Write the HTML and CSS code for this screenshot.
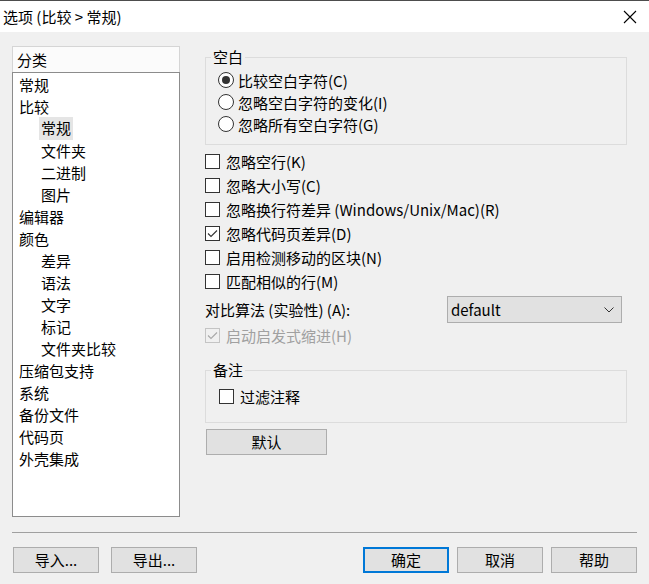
FILE: index.html
```html
<!DOCTYPE html>
<html lang="zh-CN">
<head>
	<meta charset="UTF-8">
	<meta name="viewport" content="width=device-width, initial-scale=1.0">
	<title>选项 (比较 &gt; 常规)</title>
	<link rel="stylesheet" href="styles.css">
</head>
<body>
	<div class="window">
		<div class="titlebar">
			<span class="title">选项 (比较 &gt; 常规)</span>
			<svg class="close" width="14" height="14" viewBox="0 0 14 14">
				<path d="M1 1 L13 13 M13 1 L1 13" stroke="#000" stroke-width="1.1" fill="none"/>
			</svg>
		</div>

		<div class="content">
			<div class="main">
				<div class="tree">
					<div class="tree-head">分类</div>
					<div class="tree-list">
						<div class="node"><span>常规</span></div>
						<div class="node"><span>比较</span></div>
						<div class="node sub"><span class="selected">常规</span></div>
						<div class="node sub"><span>文件夹</span></div>
						<div class="node sub"><span>二进制</span></div>
						<div class="node sub"><span>图片</span></div>
						<div class="node"><span>编辑器</span></div>
						<div class="node"><span>颜色</span></div>
						<div class="node sub"><span>差异</span></div>
						<div class="node sub"><span>语法</span></div>
						<div class="node sub"><span>文字</span></div>
						<div class="node sub"><span>标记</span></div>
						<div class="node sub"><span>文件夹比较</span></div>
						<div class="node"><span>压缩包支持</span></div>
						<div class="node"><span>系统</span></div>
						<div class="node"><span>备份文件</span></div>
						<div class="node"><span>代码页</span></div>
						<div class="node"><span>外壳集成</span></div>
					</div>
				</div>

				<div class="options">
					<fieldset class="group group-space">
						<legend>空白</legend>
						<div class="opt radio-row"><span class="radio checked"></span>比较空白字符(C)</div>
						<div class="opt radio-row"><span class="radio"></span>忽略空白字符的变化(I)</div>
						<div class="opt radio-row"><span class="radio"></span>忽略所有空白字符(G)</div>
					</fieldset>

					<div class="checks">
						<div class="opt check-row"><span class="check"></span>忽略空行(K)</div>
						<div class="opt check-row"><span class="check"></span>忽略大小写(C)</div>
						<div class="opt check-row"><span class="check"></span>忽略换行符差异 (Windows/Unix/Mac)(R)</div>
						<div class="opt check-row"><span class="check">
							<svg width="13" height="13" viewBox="0 0 13 13"><polyline points="2,6.5 5,9.5 11,3.5" fill="none" stroke="#333" stroke-width="1.1"/></svg>
						</span>忽略代码页差异(D)</div>
						<div class="opt check-row"><span class="check"></span>启用检测移动的区块(N)</div>
						<div class="opt check-row"><span class="check"></span>匹配相似的行(M)</div>
					</div>

					<div class="algo-row">
						<span>对比算法 (实验性) (A):</span>
						<div class="select">
							<span>default</span>
							<svg width="10" height="6" viewBox="0 0 10 6"><polyline points="0.5,0.5 5,5 9.5,0.5" fill="none" stroke="#333" stroke-width="1"/></svg>
						</div>
					</div>

					<div class="opt check-row disabled"><span class="check">
						<svg width="13" height="13" viewBox="0 0 13 13"><polyline points="2,6.5 5,9.5 11,3.5" fill="none" stroke="#a8a8a8" stroke-width="1.1"/></svg>
					</span>启动启发式缩进(H)</div>

					<fieldset class="group group-notes">
						<legend>备注</legend>
						<div class="opt check-row"><span class="check"></span>过滤注释</div>
					</fieldset>

					<button class="btn btn-default">默认</button>
				</div>
			</div>

			<div class="separator"></div>

			<div class="footer">
				<button class="btn">导入...</button>
				<button class="btn">导出...</button>
				<div class="footer-right">
					<button class="btn primary">确定</button>
					<button class="btn">取消</button>
					<button class="btn">帮助</button>
				</div>
			</div>
		</div>
	</div>
</body>
</html>
```

FILE: styles.css
```css
body {
	margin: 0;
	background-color: #f0f0f0;
	font-family: "Noto Sans CJK SC", "Noto Sans", sans-serif;
	font-size: 15px;
	color: #000;
}
.window {
	width: 649px;
	height: 584px;
	overflow: hidden;
	background-color: #f0f0f0;
}

/* title bar */
.titlebar {
	height: 31px;
	border-top: 1px solid #4d4d4d;
	background-color: #fff;
	display: flex;
	align-items: center;
	justify-content: space-between;
	padding: 0 12px 0 3px;
}
.title {
	line-height: 20px;
}
.close {
	display: block;
}

.content {
	padding: 14px 12px 0 12px;
}
.main {
	display: flex;
	align-items: flex-start;
}

/* category tree */
.tree {
	width: 168px;
}
.tree-head {
	box-sizing: border-box;
	height: 26px;
	border: 1px solid #d5d5d5;
	border-bottom: none;
	background-color: #fbfbfb;
	padding-left: 4px;
	line-height: 25px;
}
.tree-list {
	box-sizing: border-box;
	height: 445px;
	border: 1px solid #8c8c8c;
	background-color: #fff;
	padding-top: 1px;
}
.node {
	height: 22px;
	line-height: 22px;
	padding-left: 4px;
}
.node span {
	display: inline-block;
	padding: 0 2px;
}
.node.sub {
	padding-left: 26px;
}
.node .selected {
	background-color: #e5e5e5;
	height: 23px;
	line-height: 21px;
	margin-top: -1px;
	vertical-align: top;
}

/* options */
.options {
	width: 422px;
	margin-left: 25px;
	padding-top: 1px;
}
.group {
	margin: 0;
	border: 1px solid #dcdcdc;
	min-width: 0;
}
.group legend {
	padding: 0 2px;
	line-height: 20px;
	height: 20px;
}
.group-space {
	padding: 2px 12px 9px 12px;
}
.group-space legend {
	margin-left: -7px;
}
.group-notes {
	margin-top: 13px;
	padding: 4px 13px 14px 13px;
}
.group-notes legend {
	margin-left: -8px;
}

.opt {
	display: flex;
	align-items: center;
	white-space: nowrap;
}
.radio-row {
	height: 22px;
	gap: 4px;
}
.radio {
	box-sizing: border-box;
	width: 16px;
	height: 16px;
	border: 1px solid #333;
	border-radius: 50%;
	background-color: #fff;
	display: flex;
	align-items: center;
	justify-content: center;
}
.radio.checked::after {
	content: "";
	width: 8px;
	height: 8px;
	border-radius: 50%;
	background-color: #333;
}

.checks {
	margin-top: 4px;
}
.check-row {
	height: 24px;
	gap: 6px;
}
.check {
	box-sizing: border-box;
	width: 15px;
	height: 15px;
	border: 1px solid #333;
	background-color: #fff;
	display: flex;
	align-items: center;
	justify-content: center;
}
.check svg {
	display: block;
}
.disabled {
	color: #a0a0a0;
}
.disabled .check {
	border-color: #c4c4c4;
	background-color: #f0f0f0;
}

.algo-row {
	display: flex;
	align-items: center;
	justify-content: space-between;
	height: 27px;
	margin-top: 3px;
	padding-right: 5px;
}
.select {
	box-sizing: border-box;
	width: 175px;
	height: 27px;
	border: 1px solid #adadad;
	background-color: #e1e1e1;
	display: flex;
	align-items: center;
	justify-content: space-between;
	padding: 0 7px 0 3px;
}
.select svg {
	display: block;
}

/* buttons */
.btn {
	box-sizing: border-box;
	width: 86px;
	height: 26px;
	border: 1px solid #adadad;
	background-color: #e1e1e1;
	font-family: inherit;
	font-size: 15px;
	color: #000;
	padding: 0;
	line-height: 22px;
}
.btn.primary {
	border: 2px solid #0078d7;
}
.btn-default {
	display: block;
	width: 121px;
	margin-top: 6px;
	margin-left: 1px;
}

.separator {
	height: 1px;
	background-color: #a0a0a0;
	margin-top: 15px;
}
.footer {
	display: flex;
	gap: 12px;
	margin-top: 14px;
	padding-left: 1px;
}
.footer-right {
	margin-left: auto;
	display: flex;
	gap: 8px;
}
```
